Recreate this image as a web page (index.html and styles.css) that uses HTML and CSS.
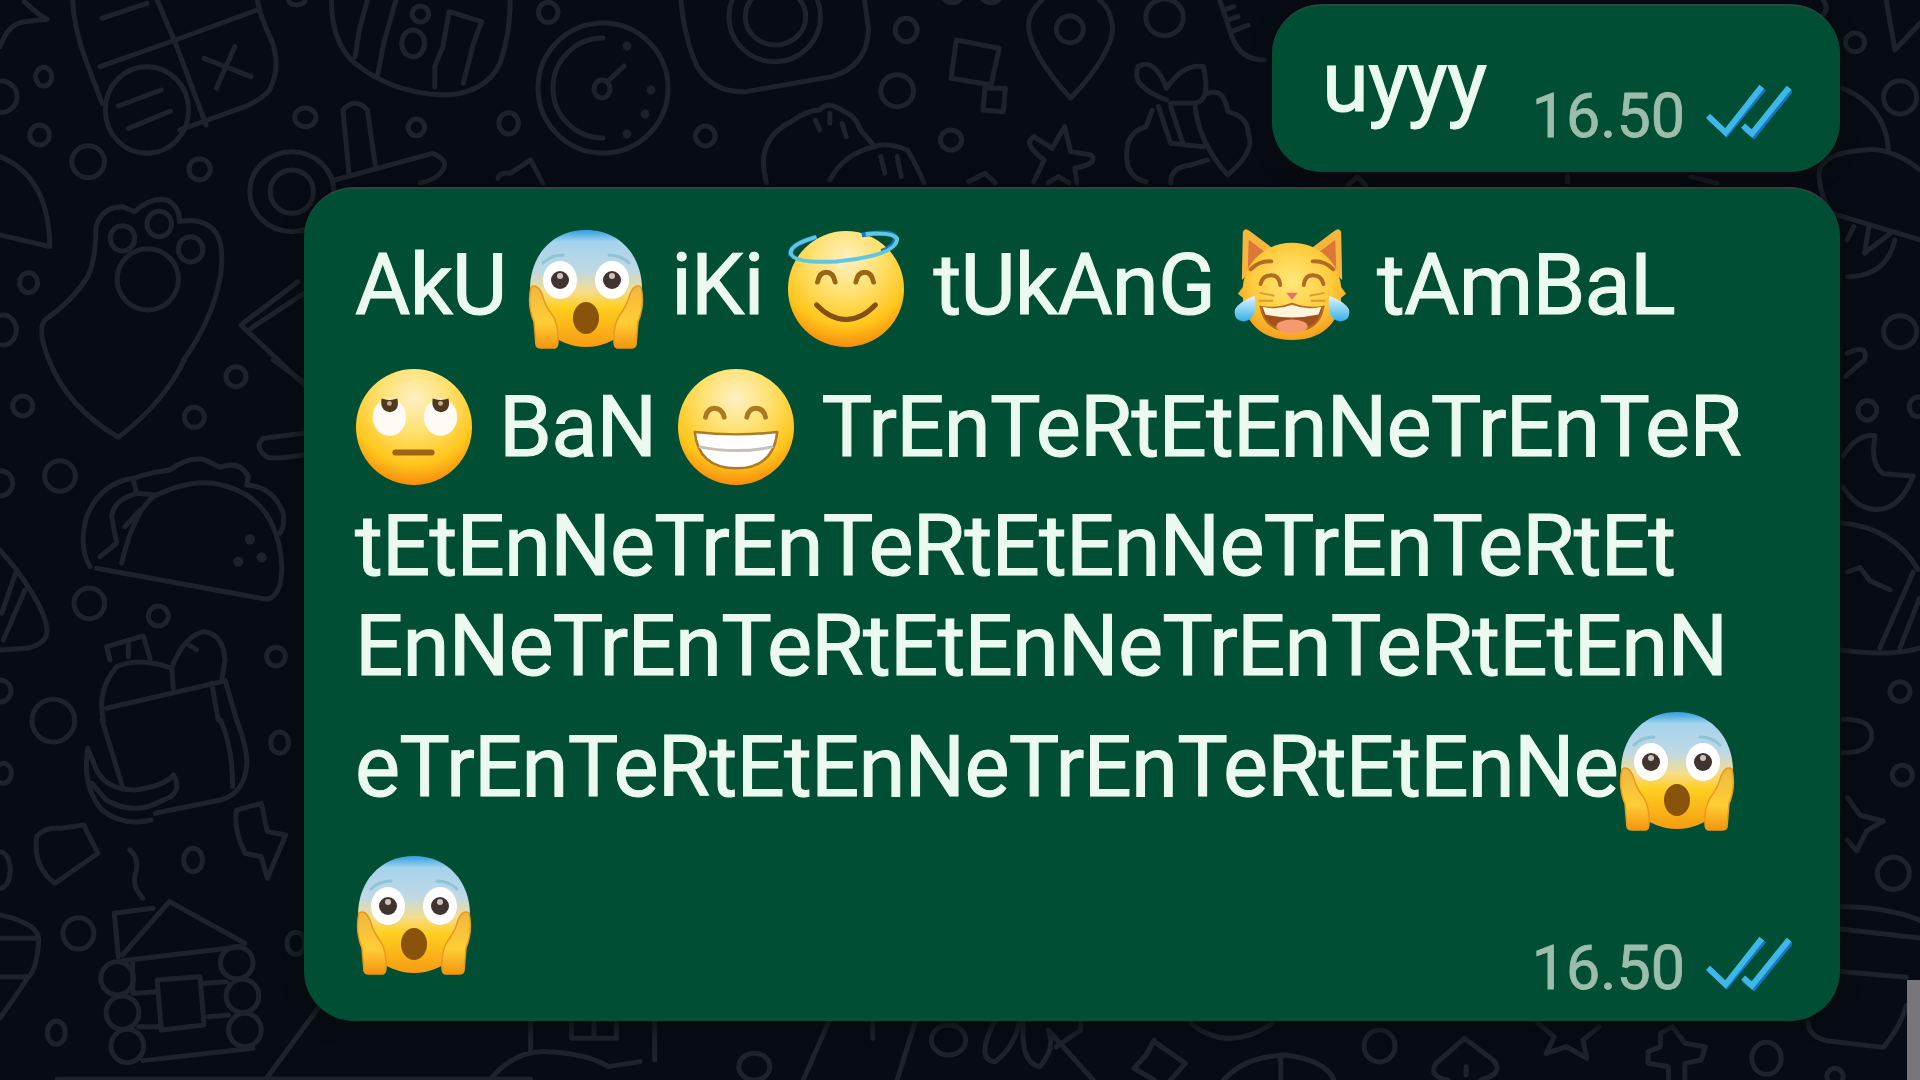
FILE: index.html
```
<!DOCTYPE html>
<html lang="id">
<head>
  <meta charset="UTF-8">
  <meta name="viewport" content="width=device-width, initial-scale=1.0">
  <title>Chat</title>
  <link rel="stylesheet" href="styles.css">
</head>
<body>
  <!-- wallpaper doodles -->
  <svg class="wallpaper" viewBox="0 0 1920 1080">
    <circle cx="603" cy="88" r="65"/>
    <path d="M603 38A50 50 0 0 0 603 138M607 82L624 66"/>
    <ellipse cx="602" cy="89" rx="8" ry="9"/>
    <circle cx="627" cy="46" r="2"/><circle cx="627" cy="134" r="2"/><circle cx="651" cy="90" r="2"/><circle cx="645" cy="114" r="2"/>
    <g transform="scale(.4082 .3333)">
      <path d="M0 140Q20 70 60 65L115 58Q90 40 60 5"/>
      <ellipse cx="107" cy="230" rx="20" ry="28"/><ellipse cx="0" cy="290" rx="42" ry="48"/><ellipse cx="97" cy="405" rx="24" ry="30"/>
      <ellipse cx="216" cy="485" rx="40" ry="48"/><ellipse cx="489" cy="508" rx="26" ry="32"/><ellipse cx="748" cy="352" rx="26" ry="28"/>
      <ellipse cx="1020" cy="382" rx="20" ry="25"/><ellipse cx="1246" cy="370" rx="24" ry="32"/><ellipse cx="1343" cy="37" rx="24" ry="30"/>
      <ellipse cx="727" cy="0" rx="20" ry="15"/><ellipse cx="70" cy="848" rx="22" ry="30"/><ellipse cx="8" cy="990" rx="32" ry="45"/>
      <path d="M178 0Q180 80 210 180L250 310M385 0L430 130L505 375M245 200L430 120L630 30M630 0Q640 60 665 120Q690 200 660 270Q640 300 600 320L440 390M250 55L360 10"/>
      <ellipse cx="360" cy="330" rx="102" ry="130"/>
      <path d="M290 318L395 270M315 385L418 333M500 175L615 230M575 140L530 265"/>
      <path d="M812 0Q812 130 870 190Q960 280 1090 285Q1190 280 1225 190Q1250 100 1250 0M900 0L880 90L870 170M970 0L940 130L925 225M1065 260V200L1085 140L1100 35L1180 65L1160 130L1135 250"/>
      <ellipse cx="1030" cy="42" rx="20" ry="24"/><ellipse cx="1012" cy="130" rx="28" ry="40"/>
      <path d="M855 520L840 330Q870 290 900 330L920 500M820 540L1060 460Q1100 480 1085 510Q1070 540 1030 548"/>
      <ellipse cx="715" cy="575" rx="103" ry="120"/><ellipse cx="715" cy="575" rx="53" ry="65"/>
      <path d="M1220 535Q1225 515 1250 520L1300 480L1330 550M0 470Q120 530 122 740L0 705"/>
      <path d="M120 1080Q90 990 110 960Q180 900 215 830Q235 780 235 680Q250 620 300 620L330 635Q370 590 410 600Q440 620 440 665Q500 650 530 700Q550 740 540 830Q520 960 450 1080"/>
      <ellipse cx="300" cy="715" rx="30" ry="38"/><ellipse cx="390" cy="672" rx="30" ry="38"/><ellipse cx="467" cy="748" rx="30" ry="38"/><ellipse cx="362" cy="838" rx="75" ry="92"/>
      <path d="M730 845L590 975L750 1160M745 880L615 985"/>
    </g>
    <g transform="translate(0 360) scale(.3333)">
      <circle cx="68" cy="138" r="30"/><circle cx="180" cy="348" r="46"/><circle cx="0" cy="370" r="38"/><circle cx="268" cy="730" r="46"/>
      <circle cx="475" cy="768" r="30"/><circle cx="583" cy="172" r="30"/><circle cx="708" cy="50" r="30"/><circle cx="828" cy="890" r="28"/>
      <circle cx="0" cy="993" r="33"/><circle cx="160" cy="1082" r="64"/>
      <path d="M147 0Q200 140 355 232Q490 130 553 0M820 0L910 65M910 220L790 235Q760 260 800 290Q820 300 910 285"/>
      <path d="M270 620Q235 560 260 470Q300 370 400 355Q460 335 510 330Q560 290 610 298L660 322Q720 300 745 350L740 375Q820 380 850 460Q855 500 840 520"/>
      <path d="M365 610Q400 460 460 410Q560 360 640 370Q760 390 810 480Q850 560 845 640Q840 710 800 718L290 625M400 360L410 400Q340 420 335 470L350 550L300 590M410 400L470 405M420 450L375 500"/>
      <circle cx="750" cy="538" r="8"/><circle cx="715" cy="605" r="8"/><circle cx="785" cy="592" r="8"/>
      <path d="M0 570L50 630Q130 740 140 800Q150 850 80 865L0 870M50 630L5 760M75 690L10 840"/>
      <path d="M330 900L320 860L430 828L450 895M385 840V890M310 1080Q290 990 350 920Q420 890 515 925M520 985L515 925Q550 830 610 815Q670 820 675 900L665 965L320 1045M560 850L590 870M635 970L655 1080M675 960L710 1080"/>
    </g>
    <g transform="translate(0 720) scale(.4082 .3333)">
      <path d="M250 0L300 200M540 0Q570 80 570 200M580 0Q605 80 605 130Q600 220 540 240L380 280M215 85Q200 200 250 270Q300 320 370 300M215 85L230 130Q250 210 330 210Q400 200 425 165Q450 220 400 240Q330 290 260 240L225 190"/>
      <path d="M90 350Q110 320 150 325L205 315L240 400L135 490Q80 440 90 350zM580 270L640 250L655 335L700 345L655 475L640 410L600 400Q570 320 580 270zM318 390Q345 420 330 470Q325 500 350 535"/>
      <ellipse cx="473" cy="420" rx="23" ry="35"/><ellipse cx="685" cy="68" rx="22" ry="32"/><ellipse cx="8" cy="160" rx="20" ry="30"/><ellipse cx="0" cy="450" rx="25" ry="55"/>
      <ellipse cx="192" cy="640" rx="38" ry="47"/><ellipse cx="138" cy="938" rx="22" ry="35"/><ellipse cx="725" cy="670" rx="22" ry="33"/>
      <path d="M290 710L280 580L375 565M300 705L415 545L600 670M300 722L590 680M330 820L385 815M500 790L555 785M340 920L395 920M510 890L560 885M350 1022L620 985M325 720V820M385 780L490 770L500 915L395 930z"/>
      <ellipse cx="287" cy="775" rx="40" ry="50"/><ellipse cx="300" cy="878" rx="40" ry="50"/><ellipse cx="312" cy="978" rx="40" ry="50"/>
      <ellipse cx="580" cy="728" rx="40" ry="48"/><ellipse cx="594" cy="828" rx="40" ry="50"/><ellipse cx="600" cy="930" rx="40" ry="50"/>
      <path d="M0 585Q95 610 95 660Q90 750 70 770L0 895M0 655H90M0 770H70M650 1080L785 855M1300 905V1000M1200 1080Q1260 990 1340 995Q1440 1000 1490 1040L1568 1025M1400 910V955H1510V910M1455 910V955M140 1078H1300"/>
    </g>
    <g transform="translate(640 0) scale(.4082 .3333)">
      <path d="M100 0Q110 120 140 200Q180 280 260 275L470 230Q555 200 560 90L550 0"/>
      <ellipse cx="330" cy="50" rx="112" ry="135"/><ellipse cx="332" cy="50" rx="74" ry="85"/>
      <ellipse cx="652" cy="90" rx="27" ry="35"/><ellipse cx="630" cy="272" rx="40" ry="48"/><ellipse cx="160" cy="408" rx="24" ry="30"/><ellipse cx="762" cy="420" rx="26" ry="30"/>
      <ellipse cx="1285" cy="52" rx="46" ry="55"/><ellipse cx="1053" cy="88" rx="33" ry="40"/><ellipse cx="765" cy="-10" rx="22" ry="18"/><ellipse cx="860" cy="-10" rx="22" ry="18"/>
      <path d="M775 120L880 145L860 255L762 235zM845 265H895L890 335L840 330zM985 0Q950 40 952 80Q955 160 1055 295Q1158 160 1158 80Q1150 20 1125 0"/>
      <path d="M310 548Q280 420 370 365Q410 330 440 330Q460 300 500 335Q530 350 540 390L575 440Q500 460 465 540M575 440Q600 425 655 450Q680 500 695 548M430 360L440 390M465 340V370M495 370L505 410M590 470L600 520M630 470L640 530M805 545L845 520L870 548"/>
      <path d="M1040 380L1055 455L1105 465Q1125 490 1065 505L1070 548M1035 390L1010 445L965 410Q935 430 990 480L965 545M1000 548L1025 530L1050 548"/>
      <path d="M1290 300Q1200 260 1220 200Q1260 170 1290 265Q1330 190 1380 200Q1400 300 1360 310L1300 310M1255 330L1240 380Q1180 400 1195 500Q1210 540 1240 545M1270 320L1300 430L1380 440M1300 320L1330 430M1360 320Q1370 430 1440 525Q1510 450 1490 400Q1490 350 1440 335Q1430 260 1390 280M1300 548Q1300 500 1350 495L1390 480"/>
      <path d="M1420 0L1450 110Q1470 180 1530 180M1430 30L1455 20M1438 60L1465 50M1450 95L1490 75"/>
    </g>
    <g transform="translate(1240 0) scale(.4337 .3333)">
      <path d="M1345 0Q1360 30 1340 50M1490 0L1510 150L1568 70M1390 265Q1490 320 1495 450M1568 510Q1500 440 1440 450Q1330 460 1335 530Q1340 600 1365 640L1568 720M1400 830Q1490 830 1510 720M1415 680L1400 720M1450 680L1440 760L1500 700M1400 1060Q1450 1030 1440 1080L1395 1130"/>
      <path d="M250 555L270 530L290 555M1040 530L1100 550M755 525V545"/>
      <ellipse cx="1418" cy="127" rx="22" ry="28"/><ellipse cx="1522" cy="292" rx="38" ry="50"/><ellipse cx="1522" cy="995" rx="38" ry="48"/>
    </g>
    <g transform="translate(1760 380) scale(.3333 .4464)">
      <path d="M250 170Q290 120 345 125Q330 190 370 210L460 215Q420 290 350 290Q290 290 250 240M240 320Q400 330 475 425M240 605Q400 620 480 600M460 430L360 600M478 490L420 600M262 430L300 420L330 450L390 470"/>
      <path d="M250 760Q340 760 335 800Q330 835 250 835M262 935L300 975L370 988L320 1010L290 1055L262 1030M240 1180Q380 1180 480 1210M240 1230L480 1250M240 1325L440 1338M145 1440Q145 1470 200 1480L370 1495Q420 1450 440 1400"/>
      <ellipse cx="322" cy="68" rx="28" ry="22"/><ellipse cx="474" cy="60" rx="26" ry="22"/><ellipse cx="420" cy="698" rx="30" ry="22"/><ellipse cx="427" cy="885" rx="30" ry="22"/><ellipse cx="400" cy="1105" rx="48" ry="36"/>
    </g>
    <g transform="translate(640 980) scale(.8163 .3333)">
      <ellipse cx="140" cy="260" rx="19" ry="40"/><ellipse cx="378" cy="180" rx="21" ry="45"/><ellipse cx="906" cy="198" rx="19" ry="48"/><ellipse cx="1380" cy="235" rx="18" ry="48"/><ellipse cx="1464" cy="290" rx="10" ry="25"/>
      <path d="M18 120V240M232 120L200 300M338 120L315 300M285 120V175M435 120Q410 240 435 245Q460 200 465 120M470 120Q465 250 490 260Q510 200 500 150L555 300M540 120V150L510 200M675 130Q720 220 775 130"/>
      <path d="M630 180L620 225L605 265L630 300M630 185L668 250L650 300M715 300Q740 230 790 225Q840 240 850 300M785 225V300M1010 175L975 250Q965 290 990 300M1010 175L1045 240Q1060 280 1030 300M1012 260V285"/>
      <path d="M1100 130L1120 170L1110 220L1135 200L1160 235L1155 180L1175 140M1250 200V160L1265 140L1280 190L1305 200L1300 240L1280 250V300M1250 200L1235 215V250L1260 260V300"/>
    </g>
  </svg>

  <!-- emoji and tick symbols -->
  <svg class="defs">
    <defs>
      <radialGradient id="face" cx=".5" cy=".25" r=".76">
        <stop offset="0" stop-color="#fff0c4"/>
        <stop offset=".4" stop-color="#ffe06c"/>
        <stop offset=".75" stop-color="#ffc61c"/>
        <stop offset="1" stop-color="#f68a0c"/>
      </radialGradient>
      <linearGradient id="scream-face" x1="0" y1="0" x2="0" y2="1">
        <stop offset="0" stop-color="#2f9fe0"/>
        <stop offset=".1" stop-color="#a5d3ec"/>
        <stop offset=".35" stop-color="#bfd9e4"/>
        <stop offset=".52" stop-color="#f3dd90"/>
        <stop offset=".66" stop-color="#ffcf1f"/>
        <stop offset="1" stop-color="#f79b12"/>
      </linearGradient>
      <linearGradient id="hand" x1="0" y1="0" x2="0" y2="1">
        <stop offset="0" stop-color="#f0b840"/>
        <stop offset=".6" stop-color="#ffcd35"/>
        <stop offset="1" stop-color="#f59410"/>
      </linearGradient>
      <radialGradient id="cat-face" cx=".5" cy=".4" r=".62">
        <stop offset="0" stop-color="#ffe87a"/>
        <stop offset=".6" stop-color="#ffcb3b"/>
        <stop offset="1" stop-color="#f59a1c"/>
      </radialGradient>
      <linearGradient id="tear" x1="0" y1="0" x2="0" y2="1">
        <stop offset="0" stop-color="#e4f6fb"/>
        <stop offset="1" stop-color="#35b1ea"/>
      </linearGradient>
    </defs>
    <symbol id="scream" viewBox="2 0 116 120">
      <path fill="url(#scream-face)" d="M60 1C26 1 4 27 4 60C4 94 30 118 60 118S116 94 116 60C116 27 94 1 60 1z"/>
      <path fill="#004f35" d="M0 68L10 120H0zM120 68L110 120H120z"/>
      <path fill="url(#hand)" stroke="#e79a1b" stroke-width="1.5" d="M5 58Q1 76 8 93L10 116Q11 119 15 119H29Q32 118 32 113Q33 98 27 87Q19 77 16 65Q11 54 5 58zM115 58Q119 76 112 93L110 116Q109 119 105 119H91Q88 118 88 113Q87 98 93 87Q101 77 104 65Q109 54 115 58z"/>
      <ellipse cx="34" cy="51" rx="17" ry="19" fill="#fff"/><ellipse cx="86" cy="51" rx="17" ry="19" fill="#fff"/>
      <circle cx="34" cy="51" r="9" fill="#41342f"/><circle cx="86" cy="51" r="9" fill="#41342f"/>
      <circle cx="34" cy="47" r="3" fill="#cbc4c0"/><circle cx="86" cy="47" r="3" fill="#cbc4c0"/>
      <path fill="none" stroke="#8fc3d6" stroke-width="3" stroke-linecap="round" d="M17 34Q25 26 37 26M103 34Q95 26 83 26"/>
      <ellipse cx="60" cy="89" rx="13" ry="16" fill="#89530c"/>
    </symbol>
    <symbol id="halo" viewBox="0 0 120 120">
      <ellipse cx="60" cy="60" rx="59" ry="59" fill="url(#face)"/>
      <path fill="none" stroke="#1679bd" stroke-width="5" d="M4 26Q1 15 28 8M76 5Q108 0 110 7Q112 16 96 22"/>
      <path fill="none" stroke="#5fc6e3" stroke-width="4" d="M30 7Q2 15 4 24Q7 34 50 32Q112 26 112 9Q108 2 80 4"/>
      <path fill="none" stroke="#996714" stroke-width="5" stroke-linecap="round" d="M31 53Q33 43 40 43Q47 43 49 53M70 53Q72 43 79 43Q86 43 88 53"/>
      <path fill="none" stroke="#825014" stroke-width="5" stroke-linecap="round" d="M30 76Q44 91 60 91T90 76"/>
    </symbol>
    <symbol id="cat" viewBox="0 0 120 120">
      <path fill="#f7b53d" d="M9 55L10 6Q12 1 17 5L42 24zM111 55L110 6Q108 1 103 5L78 24z"/>
      <path fill="#d97837" d="M15 45L16 14L37 30zM105 45L104 14L83 30z"/>
      <path fill="url(#cat-face)" d="M60 17C33 17 12 37 10 62L5 69L10 73C12 100 31 116 60 116S108 100 110 73L115 69L110 62C108 37 87 17 60 17z"/>
      <path fill="none" stroke="#b26b22" stroke-width="4" stroke-linecap="round" d="M18 44Q27 35 39 36M102 44Q93 35 81 36M28 59Q30 50 39 50Q47 50 48 60M72 60Q73 50 81 50Q90 50 92 59"/>
      <path fill="none" stroke="#d0a034" stroke-width="2" d="M27 68L42 71M26 76L41 76M93 68L78 71M94 76L79 76"/>
      <path fill="#ef6d6e" d="M54 68H66L60 75z"/>
      <path fill="#a1511c" stroke="#b86b1d" stroke-width="2" d="M28 82Q44 85 60 79Q76 85 92 82Q88 107 60 107T28 82z"/>
      <path fill="#fff4dc" d="M30 82Q45 86 60 80Q75 86 90 82L87 90Q60 96 33 90z"/>
      <ellipse cx="60" cy="102" rx="16" ry="7" fill="#f59a6f"/>
      <path fill="url(#tear)" d="M22 71Q26 95 11 97Q0 96 2 85Q6 77 22 71zM98 71Q94 95 109 97Q120 96 118 85Q114 77 98 71z"/>
    </symbol>
    <symbol id="eye-roll" viewBox="0 0 120 120">
      <circle cx="60" cy="60" r="59" fill="url(#face)"/>
      <ellipse cx="35" cy="50" rx="17" ry="19" fill="#fffaf3"/><ellipse cx="87" cy="50" rx="17" ry="19" fill="#fffaf3"/>
      <path fill="#50371e" d="M27 31Q35 34 43 31Q46 44 35 45Q25 43 27 31zM79 31Q87 34 95 31Q98 44 87 45Q77 43 79 31z"/>
      <circle cx="35" cy="36" r="2.5" fill="#bfae93"/><circle cx="87" cy="36" r="2.5" fill="#bfae93"/>
      <path stroke="#9b6513" stroke-width="6" stroke-linecap="round" d="M41 86H78"/>
    </symbol>
    <symbol id="grin" viewBox="0 0 120 120">
      <circle cx="60" cy="60" r="59" fill="url(#face)"/>
      <path fill="none" stroke="#aa781d" stroke-width="5" stroke-linecap="round" d="M29 50Q31 41 38 41Q46 41 48 50M71 50Q73 41 80 41Q88 41 90 50"/>
      <path fill="#fff" stroke="#ad7a27" stroke-width="2.5" stroke-linejoin="round" d="M18 65Q60 70 102 65Q98 102 60 102T18 65z"/>
      <path fill="none" stroke="#c9bfb4" stroke-width="3" d="M22 80Q60 88 98 80"/>
    </symbol>
    <symbol id="ticks" viewBox="0 0 88 56">
      <g fill="none" stroke-width="6">
        <path stroke="#1577c4" d="M4 34L21 50L59 4M39 44L49 52L87 5"/>
        <path stroke="#3fb8e8" d="M2 32L20 49L57 2M38 42L47 50L85 3"/>
      </g>
    </symbol>
  </svg>

  <div class="chat">
    <div class="message message--short">
      <span class="text">uyyy</span>
      <div class="meta">
        <span class="time">16.50</span>
        <svg class="ticks"><use href="#ticks"/></svg>
      </div>
    </div>
    <div class="message message--long">
      <div class="line line--emoji">
        <span>AkU</span>
        <svg class="emoji emoji--low"><use href="#scream"/></svg>
        <span>iKi</span>
        <svg class="emoji emoji--low emoji--halo"><use href="#halo"/></svg>
        <span>tUkAnG</span>
        <svg class="emoji emoji--cat"><use href="#cat"/></svg>
        <span>tAmBaL</span>
      </div>
      <div class="line line--emoji">
        <svg class="emoji"><use href="#eye-roll"/></svg>
        <span>BaN</span>
        <svg class="emoji"><use href="#grin"/></svg>
        <span>TrEnTeRtEtEnNeTrEnTeR</span>
      </div>
      <div class="line">tEtEnNeTrEnTeRtEtEnNeTrEnTeRtEt</div>
      <div class="line line--low">EnNeTrEnTeRtEtEnNeTrEnTeRtEtEnN</div>
      <div class="line line--joined">
        <span>eTrEnTeRtEtEnNeTrEnTeRtEtEnNe</span>
        <svg class="emoji emoji--low"><use href="#scream"/></svg>
      </div>
      <div class="line line--last">
        <svg class="emoji"><use href="#scream"/></svg>
        <div class="meta">
          <span class="time">16.50</span>
          <svg class="ticks"><use href="#ticks"/></svg>
        </div>
      </div>
    </div>
  </div>
  <div class="scrollbar"></div>
</body>
</html>
```
FILE: styles.css
```
* {
  margin: 0;
  box-sizing: border-box;
}

body {
  width: 1920px;
  height: 1080px;
  overflow: hidden;
  background-color: #070b14;
  font-family: Roboto, "Noto Sans", sans-serif;
}

.wallpaper {
  position: absolute;
  top: 0;
  left: 0;
  width: 1920px;
  height: 1080px;
  fill: none;
  stroke: #1e222a;
  stroke-width: 5px;
  stroke-linejoin: round;
  stroke-linecap: round;
}

.wallpaper * {
  vector-effect: non-scaling-stroke;
}

.defs {
  position: absolute;
  width: 0;
  height: 0;
}

.chat {
  position: relative;
  display: flex;
  flex-direction: column;
  align-items: flex-end;
  gap: 15px;
  padding: 4px 80px 0 0;
}

.message {
  background-color: #004f35;
  border-top: 2px solid #28483d;
  border-radius: 50px;
  box-shadow: 0 4px 16px 4px rgba(8, 12, 10, .7);
  color: #ecf9f0;
  font-size: 85px;
  letter-spacing: -.8px;
  -webkit-text-stroke: 1px #ecf9f0;
}

.message--short {
  display: flex;
  justify-content: space-between;
  width: 568px;
  height: 168px;
  padding: 0 48px 0 50px;
}

.text {
  line-height: 152px;
}

.message--long {
  width: 1536px;
  height: 834px;
  padding: 25px 48px 0 51px;
}

.line {
  display: flex;
  align-items: center;
  height: 97px;
  line-height: 97px;
  white-space: nowrap;
}

.line--emoji {
  gap: 21px;
  height: 142px;
}

.line--emoji .emoji + span {
  margin-left: 5px;
}

.line--low {
  height: 102px;
}

.line--joined {
  height: 140px;
}

.line--last {
  justify-content: space-between;
  height: 156px;
}

.emoji {
  flex: none;
  width: 118px;
  height: 120px;
}

.emoji--low {
  margin-top: 8px;
}

.emoji--halo {
  margin-left: 2px;
  margin-right: 3px;
}

.emoji--cat {
  margin-left: -3px;
}

.meta {
  display: flex;
  align-items: flex-end;
  gap: 21px;
}

.message--short .meta {
  padding-bottom: 32px;
}

.line--last .meta {
  align-self: flex-end;
  padding-bottom: 1px;
}

.time {
  color: #9dbdac;
  font-size: 61px;
  letter-spacing: 0;
  line-height: 48px;
  -webkit-text-stroke: .8px #9dbdac;
}

.ticks {
  width: 86px;
  height: 56px;
}

.scrollbar {
  position: absolute;
  right: 0;
  bottom: 0;
  width: 13px;
  height: 100px;
  background-color: #77777b;
}
```
